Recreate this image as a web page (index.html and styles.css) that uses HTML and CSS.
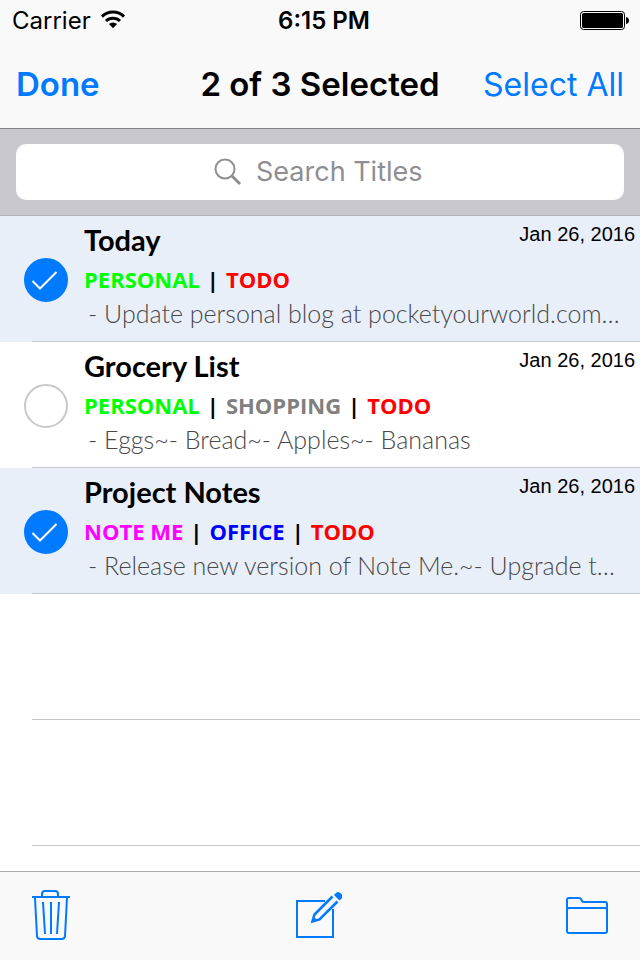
FILE: index.html
```html
<!DOCTYPE html>
<html lang="en">
<head>
<meta charset="utf-8">
<meta name="viewport" content="width=device-width, initial-scale=1">
<title>Notes</title>
<link rel="stylesheet" href="styles.css">
</head>
<body>
<div class="app">
  <header class="header">
    <div class="status">
      <div class="status-left">
        <span>Carrier</span>
        <svg class="wifi" width="26" height="20" viewBox="0 0 26 20" aria-hidden="true">
          <path d="M2 6.600a15.600 15.600 0 0 1 22 0" fill="none" stroke="#000" stroke-width="3"/>
          <path d="M6 11a10 10 0 0 1 14 0" fill="none" stroke="#000" stroke-width="3"/>
          <path d="M8.900 14a6 6 0 0 1 8.200 0L13 18.300z"/>
        </svg>
      </div>
      <span class="time">6:15 PM</span>
      <svg class="battery" width="50" height="20" viewBox="0 0 50 20" aria-label="Battery full">
        <rect x=".5" y="1.500" width="44" height="18" rx="3" fill="none" stroke="#000"/>
        <rect x="2" y="3" width="41" height="15" rx="1.500"/>
        <path d="M46 7q3 .5 3 3.500t-3 3.500z"/>
      </svg>
    </div>
    <nav class="nav">
      <button class="nav-button strong" type="button">Done</button>
      <h1 class="nav-title">2 of 3 Selected</h1>
      <button class="nav-button end" type="button">Select All</button>
    </nav>
  </header>

  <div class="search-bar">
    <label class="search">
      <svg width="28" height="28" viewBox="0 0 28 28" fill="none" stroke="#8e8e93" aria-hidden="true">
        <circle cx="11" cy="11" r="9.500" stroke-width="2"/>
        <path d="M18 18l8 8" stroke-width="3"/>
      </svg>
      <input class="search-input" type="text" placeholder="Search Titles" aria-label="Search Titles">
    </label>
  </div>

  <main class="list">
    <div class="row selected">
      <label class="check">
        <input type="checkbox" checked aria-label="Select Today">
        <svg width="44" height="44" viewBox="0 0 44 44" aria-hidden="true"><path d="M8.500 23L16 30.500 32.500 14"/></svg>
      </label>
      <div class="content">
        <div class="top"><h2 class="title">Today</h2><time class="date" datetime="2016-01-26">Jan 26, 2016</time></div>
        <p class="tags"><span class="green">PERSONAL</span><span>|</span><span class="red">TODO</span></p>
        <p class="snippet">- Update personal blog at pocketyourworld.com…</p>
      </div>
    </div>
    <div class="row">
      <label class="check">
        <input type="checkbox" aria-label="Select Grocery List">
        <svg width="44" height="44" viewBox="0 0 44 44" aria-hidden="true"><path d="M8.500 23L16 30.500 32.500 14"/></svg>
      </label>
      <div class="content">
        <div class="top"><h2 class="title">Grocery List</h2><time class="date" datetime="2016-01-26">Jan 26, 2016</time></div>
        <p class="tags"><span class="green">PERSONAL</span><span>|</span><span class="gray">SHOPPING</span><span>|</span><span class="red">TODO</span></p>
        <p class="snippet">- Eggs~- Bread~- Apples~- Bananas</p>
      </div>
    </div>
    <div class="row selected">
      <label class="check">
        <input type="checkbox" checked aria-label="Select Project Notes">
        <svg width="44" height="44" viewBox="0 0 44 44" aria-hidden="true"><path d="M8.500 23L16 30.500 32.500 14"/></svg>
      </label>
      <div class="content">
        <div class="top"><h2 class="title">Project Notes</h2><time class="date" datetime="2016-01-26">Jan 26, 2016</time></div>
        <p class="tags"><span class="magenta">NOTE ME</span><span>|</span><span class="blue">OFFICE</span><span>|</span><span class="red">TODO</span></p>
        <p class="snippet">- Release new version of Note Me.~- Upgrade t…</p>
      </div>
    </div>
    <div class="row"></div>
    <div class="row"></div>
  </main>

  <footer class="toolbar">
    <button type="button" aria-label="Delete">
      <svg width="40" height="52" viewBox="0 0 40 52" fill="none" stroke="#007aff" stroke-width="2">
        <path d="M1 8h38M11 7V5q0-3 3-3h10q3 0 3 3v2M4 9l2 38q.3 3 3.500 3h21q3.200 0 3.500-3l2-38M12 13l2 32M20 13v32M28 13l-2 32"/>
      </svg>
    </button>
    <button type="button" aria-label="Compose">
      <svg width="48" height="52" viewBox="0 0 48 52" fill="none" stroke="#007aff" stroke-width="2">
        <path d="M31 12H3v36h36V20"/>
        <path d="M38.500 7.500L20.500 25.500 18.500 32.500 25.500 30.500 43.500 12.500" stroke-width="2.500"/>
        <path d="M17.500 33.500l2-6 4 4z" fill="#007aff" stroke="none"/>
        <path d="M40 6L42.500 3.500q2-1.500 4.500 1t1 4.500L45.500 11.500z" fill="#007aff" stroke="none"/>
      </svg>
    </button>
    <button type="button" aria-label="Move to folder">
      <svg width="44" height="52" viewBox="0 0 44 52" fill="none" stroke="#007aff" stroke-width="2" stroke-linejoin="round">
        <path d="M2 42V11q0-2 2-2h10q1.500 0 2.200 1.500L17 12q.5 1 2 1h21q2 0 2 2v27q0 2-2 2H4q-2 0-2-2zM2 21q0-2 2-2h36q2 0 2 2"/>
      </svg>
    </button>
  </footer>
</div>
</body>
</html>
```
FILE: styles.css
```css
* { box-sizing: border-box; }

body {
  margin: 0;
  color: #000;
  background: #fff;
  font-family: Inter, "Liberation Sans", sans-serif;
}

h1, h2, p { margin: 0; }

button {
  padding: 0;
  border: 0;
  background: none;
  color: #007aff;
  font: inherit;
}

svg { display: block; flex: none; }

.app {
  display: flex;
  flex-direction: column;
  min-height: 100vh;
}

.header {
  background: #f9f9f9;
  border-bottom: 1px solid #828287;
}

.status {
  display: grid;
  grid-template-columns: 1fr auto 1fr;
  align-items: center;
  height: 40px;
  padding: 0 10px 0 12px;
  font-size: 24px;
}

.status-left { display: flex; align-items: center; gap: 9px; }
.time { padding-left: 6px; font-weight: 600; }
.battery { justify-self: end; }

.nav {
  display: grid;
  grid-template-columns: 1fr auto 1fr;
  align-items: center;
  height: 88px;
  padding: 0 16px;
  font-size: 32px;
}

.nav-button { justify-self: start; }
.nav-button.end { justify-self: end; }

.strong,
.nav-title {
  font-size: 33px;
  font-weight: 600;
}

.search-bar {
  padding: 15px 16px;
  background: #c9c8ce;
  border-bottom: 1px solid #b4b4b8;
}

.search {
  display: flex;
  align-items: center;
  justify-content: center;
  gap: 14px;
  height: 56px;
  border-radius: 10px;
  background: #fff;
}

.search-input {
  width: 170px;
  padding: 0;
  border: 0;
  outline: 0;
  background: none;
  font: 27px/36px Inter, "Liberation Sans", sans-serif;
}

.search-input::placeholder { color: #8e8e93; }

.list { flex: 1; }

.row {
  position: relative;
  display: flex;
  height: 126px;
  padding-left: 24px;
}

.row::after {
  content: "";
  position: absolute;
  inset: auto 0 0 32px;
  height: 1px;
  background: #c8c7cc;
}

.row.selected { background: #e8eff9; }

.check {
  display: grid;
  align-self: center;
  margin-right: 16px;
  padding-top: 2px;
}

.check > * { grid-area: 1 / 1; }

.check input {
  width: 44px;
  height: 44px;
  margin: 0;
  appearance: none;
  border: 2px solid #c7c7cc;
  border-radius: 50%;
}

.check input:checked {
  border-color: #007aff;
  background: #007aff;
}

.check svg {
  visibility: hidden;
  fill: none;
  stroke: #fff;
  stroke-width: 2;
}

.check input:checked + svg { visibility: visible; }

.content {
  flex: 1;
  min-width: 0;
  padding-top: 4px;
}

.top {
  display: flex;
  justify-content: space-between;
  padding-right: 5px;
}

.title {
  font: 700 29px/40px Lato, sans-serif;
}

.date {
  font: 20px/28px "Liberation Sans", Arial, sans-serif;
}

.tags {
  display: flex;
  gap: 7px;
  font: 700 22px/38px "Open Sans", sans-serif;
}

.snippet {
  padding-left: 4px;
  overflow: hidden;
  color: #484848;
  font: 300 25px/30px Lato, sans-serif;
  text-overflow: ellipsis;
  white-space: nowrap;
}

.green { color: #0f0; }
.red { color: #f00; }
.gray { color: #808080; }
.magenta { color: #f0f; }
.blue { color: #00f; }

.toolbar {
  display: flex;
  align-items: center;
  justify-content: space-between;
  height: 89px;
  padding: 0 31px 2px;
  background: #f9f9f9;
  border-top: 1px solid #acacac;
}
```
